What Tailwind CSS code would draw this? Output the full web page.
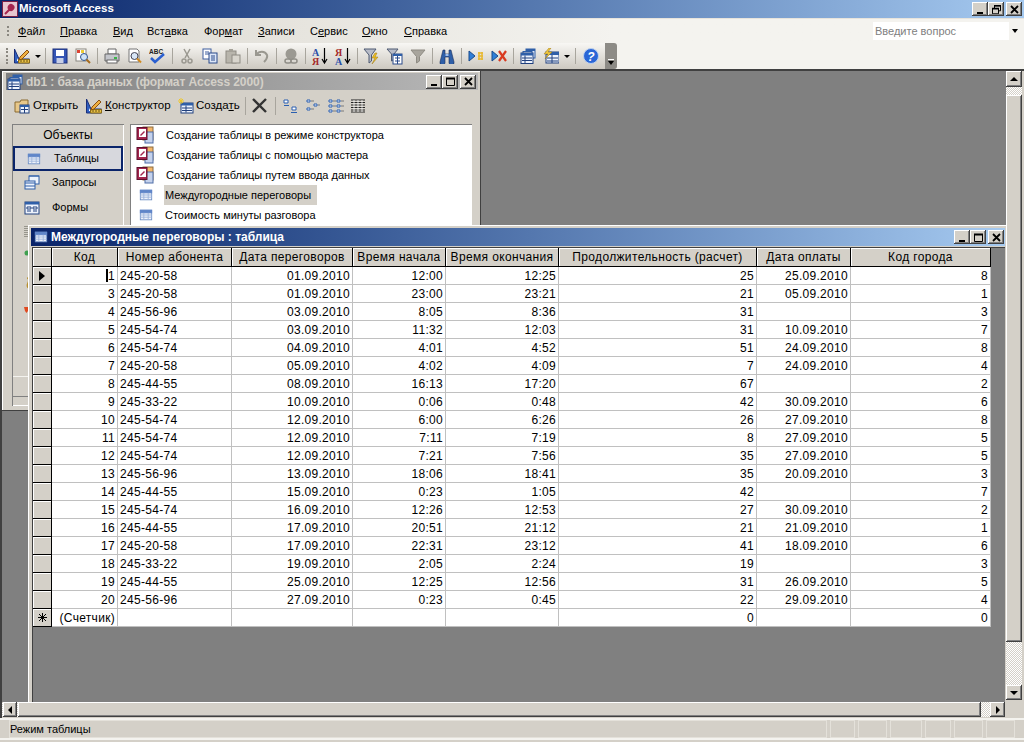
<!DOCTYPE html>
<html lang="ru">
<head>
<meta charset="UTF-8">
<title>Microsoft Access</title>
<script src="https://cdn.jsdelivr.net/npm/@tailwindcss/browser@4"></script>
</head>
<body class="bg-[#d4d0c8] text-black overflow-hidden font-['Liberation_Sans',Arial,sans-serif] text-[12px] leading-none">

<!-- icons used more than once -->
<svg class="hidden">
  <symbol id="i-table" viewBox="0 0 16 16"><rect x="1.500" y="2.500" width="13" height="11" fill="#eef2fb" stroke="#6d8ec4"/><rect x="1.500" y="2.500" width="13" height="3" fill="#5f85c8" stroke="#5f85c8"/><path d="M1.500 8h13M1.500 10.500h13M5.500 5.500v8M10.500 5.500v8" stroke="#9db4da"/></symbol>
  <symbol id="i-design" viewBox="0 0 16 16"><path d="M0.500 1v14h15v-4H5L0.500 1z" fill="#2f5fc0" stroke="#1b2f7a"/><path d="M3 10l1.500 3h-1.500z" fill="#fff"/><path d="M4.500 11.500h11v3.500h-11z" fill="#e8c14a" stroke="#8a6b16"/><path d="M7 12v2M10 12v2M13 12v2" stroke="#6b5210"/><path d="M6 9l7-7 2 2-7 7-3 1z" fill="#f0b040" stroke="#8a4f10"/></symbol>
  <symbol id="i-access" viewBox="0 0 18 18"><rect x="7" y="1" width="10" height="13" fill="#f3b66a" stroke="#8a6a40"/><rect x="9" y="6" width="8" height="11" fill="#c5d2ec" stroke="#4f6ea8"/><rect x="1" y="1.500" width="10" height="12" fill="#a5264f" stroke="#5f0f2c"/><rect x="3" y="3" width="7" height="8" fill="#fff"/><path d="M4 9l4-4 1 1-4 4z" fill="#a5264f"/></symbol>
  <symbol id="i-db" viewBox="0 0 16 16"><rect x="6" y="1" width="9" height="9" fill="#dbe6f8" stroke="#2f5fa8"/><rect x="6" y="1" width="9" height="2" fill="#2f5fa8"/><rect x="3" y="3.500" width="9" height="9" fill="#dbe6f8" stroke="#2f5fa8"/><rect x="1" y="5" width="12" height="10.500" fill="#eef3fc" stroke="#20407e"/><rect x="1" y="5" width="12" height="2.500" fill="#2f5fa8"/><path d="M2 10h10M2 12.500h10M5 7.500v8" stroke="#20407e"/></symbol>
  <symbol id="i-cap-min" viewBox="0 0 9 9"><rect x="1" y="7" width="6" height="2" fill="#000"/></symbol>
  <symbol id="i-cap-max" viewBox="0 0 9 9"><path d="M0.500 1.500h8v7h-8z" fill="none" stroke="#000"/><path d="M0 1.500h9" stroke="#000" stroke-width="2"/></symbol>
  <symbol id="i-cap-res" viewBox="0 0 9 9"><path d="M2.500 3V0.800h6v5H6.500M0.500 3.800h6v5h-6z" fill="none" stroke="#000"/><path d="M2 0.800h7M0 3.500h7" stroke="#000" stroke-width="1.500"/></symbol>
  <symbol id="i-cap-x" viewBox="0 0 9 9"><path d="M1 1l7 7M8 1l-7 7" stroke="#000" stroke-width="1.800"/></symbol>
</svg>

<div class="w-[1024px] h-[742px] flex flex-col overflow-hidden">

  <!-- app title bar -->
  <div class="h-[18px] shrink-0 flex items-center bg-linear-to-r from-[#0a246a] to-[#a6caf0] pl-[2px] pr-[2px]">
    <svg class="w-[16px] h-[16px]" viewBox="0 0 16 16"><rect x="0.500" y="0.500" width="15" height="15" fill="#e7c6cf" stroke="#7a1f45"/><path d="M3 13l5-5M7 5a2.500 2.500 0 1 1 4 3 2.500 2.500 0 0 1-4-3z" stroke="#a5264f" stroke-width="2" fill="#a5264f"/></svg>
    <span class="ml-[1px] text-white font-bold text-[11.500px]">Microsoft Access</span>
    <div class="ml-auto flex">
      <span class="w-[16px] h-[14px] flex items-center justify-center bg-[#d4d0c8] shadow-[inset_-1px_-1px_0_#404040,inset_1px_1px_0_#fff,inset_-2px_-2px_0_#808080]"><svg class="w-[9px] h-[9px]"><use href="#i-cap-min"/></svg></span>
      <span class="w-[16px] h-[14px] flex items-center justify-center bg-[#d4d0c8] shadow-[inset_-1px_-1px_0_#404040,inset_1px_1px_0_#fff,inset_-2px_-2px_0_#808080]"><svg class="w-[9px] h-[9px]"><use href="#i-cap-res"/></svg></span>
      <span class="ml-[2px] w-[16px] h-[14px] flex items-center justify-center bg-[#d4d0c8] shadow-[inset_-1px_-1px_0_#404040,inset_1px_1px_0_#fff,inset_-2px_-2px_0_#808080]"><svg class="w-[9px] h-[9px]"><use href="#i-cap-x"/></svg></span>
    </div>
  </div>

  <!-- menu bar -->
  <div class="h-[25px] shrink-0 flex items-center text-[11px] bg-linear-to-r from-[#dad7cf] to-[#f4f3ef] to-60% border-t border-[#e8e4dc] pl-[7px] pr-[3px]">
    <span class="w-[2px] h-[10px] mr-[9px] border-l-2 border-dotted border-[#8a8780]"></span>
    <span class="w-[42px]"><u>Ф</u>айл</span>
    <span class="w-[53px]"><u>П</u>равка</span>
    <span class="w-[34px]"><u>В</u>ид</span>
    <span class="w-[57px]">Вст<u>а</u>вка</span>
    <span class="w-[54px]">Фор<u>м</u>ат</span>
    <span class="w-[52px]"><u>З</u>аписи</span>
    <span class="w-[52px]">С<u>е</u>рвис</span>
    <span class="w-[42px]"><u>О</u>кно</span>
    <span class="w-[60px]"><u>С</u>правка</span>
    <div class="ml-auto w-[148px] h-[18px] bg-white flex items-center pl-[2px] text-[#808080] text-[11px]">Введите вопрос
      <span class="ml-auto w-[12px] h-[18px] bg-[#f4f3ef] flex items-center justify-center"><span class="border-x-[3.500px] border-x-transparent border-t-[4px] border-t-black"></span></span>
    </div>
  </div>

  <!-- standard toolbar -->
  <div class="h-[26px] shrink-0 bg-[#f4f3ef]">
    <div class="w-[617px] h-[26px] flex items-center rounded-r-[3px] pl-[6px] bg-linear-to-b from-[#f8f7f4] to-[#cdc9c1]">
      <span class="w-[2px] h-[16px] mr-[2px] border-l-2 border-dotted border-[#8a8780]"></span>
      <span class="w-[23px] flex justify-center"><svg class="w-[16px] h-[16px]"><use href="#i-design"/></svg></span>
      <span class="w-[9px] flex justify-center"><span class="border-x-[3px] border-x-transparent border-t-[3px] border-t-black"></span></span>
      <span class="w-[6px] flex justify-center"><span class="w-[1px] h-[16px] bg-[#a8a59d]"></span></span>
      <span class="w-[23px] flex justify-center"><svg class="w-[16px] h-[16px]" viewBox="0 0 16 16"><rect x="1" y="1" width="14" height="14" fill="#3555b5" stroke="#1b2f7a"/><rect x="4" y="2" width="8" height="6" fill="#fff"/><rect x="4.500" y="10" width="7" height="5" fill="#c7cfe6"/></svg></span>
      <span class="w-[23px] flex justify-center"><svg class="w-[16px] h-[16px]" viewBox="0 0 16 16"><rect x="1" y="1" width="10" height="12" fill="#fff" stroke="#8a8780"/><rect x="2" y="2" width="3" height="3" fill="#d43"/><rect x="6" y="2" width="3" height="3" fill="#ec3"/><circle cx="9" cy="9" r="3.500" fill="#cfe3f7" stroke="#33558a"/><path d="M11.500 11.500l3.500 3.500" stroke="#a66b1e" stroke-width="2"/></svg></span>
      <span class="w-[6px] flex justify-center"><span class="w-[1px] h-[16px] bg-[#a8a59d]"></span></span>
      <span class="w-[23px] flex justify-center"><svg class="w-[16px] h-[16px]" viewBox="0 0 16 16"><path d="M4 1h8v5H4z" fill="#fff" stroke="#666"/><path d="M1 6h14v7H1z" fill="#c4c6cc" stroke="#666"/><rect x="10" y="9" width="3" height="2" fill="#3bb54a"/><rect x="3" y="12" width="10" height="3" fill="#fff" stroke="#666"/></svg></span>
      <span class="w-[23px] flex justify-center"><svg class="w-[16px] h-[16px]" viewBox="0 0 16 16"><path d="M2 1h8l2 2v11H2z" fill="#fff" stroke="#777"/><circle cx="7.500" cy="8" r="3.500" fill="#d8e6f6" stroke="#445"/><path d="M10 10.500l4 4" stroke="#d08a20" stroke-width="2"/></svg></span>
      <span class="w-[23px] flex justify-center"><svg class="w-[17px] h-[16px]" viewBox="0 0 17 16"><text x="0" y="6" font-size="6.500" font-weight="700" fill="#222">ABC</text><path d="M2 10l4 4 9-8" fill="none" stroke="#2a5fd0" stroke-width="2.500"/></svg></span>
      <span class="w-[6px] flex justify-center"><span class="w-[1px] h-[16px] bg-[#a8a59d]"></span></span>
      <span class="w-[23px] flex justify-center"><svg class="w-[14px] h-[16px]" viewBox="0 0 14 16"><path d="M4 1l5 9M10 1l-5 9" stroke="#9a9890" stroke-width="1.500"/><circle cx="4" cy="13" r="2" fill="none" stroke="#9a9890" stroke-width="1.500"/><circle cx="10" cy="13" r="2" fill="none" stroke="#9a9890" stroke-width="1.500"/></svg></span>
      <span class="w-[23px] flex justify-center"><svg class="w-[16px] h-[16px]" viewBox="0 0 16 16"><rect x="1" y="1" width="8" height="10" fill="#fff" stroke="#3f5f9f"/><path d="M3 4h4M3 6h4" stroke="#3f5f9f"/><rect x="7" y="5" width="8" height="10" fill="#dde7f8" stroke="#2a4a8a"/><path d="M9 8h4M9 10h4M9 12h4" stroke="#2a4a8a"/></svg></span>
      <span class="w-[23px] flex justify-center"><svg class="w-[16px] h-[16px]" viewBox="0 0 16 16"><rect x="1" y="3" width="10" height="12" fill="#b8b5ac" stroke="#8e8b83"/><rect x="4" y="1" width="4" height="3" fill="#a5a299"/><rect x="7" y="7" width="8" height="8" fill="#d8d5cd" stroke="#8e8b83"/></svg></span>
      <span class="w-[6px] flex justify-center"><span class="w-[1px] h-[16px] bg-[#a8a59d]"></span></span>
      <span class="w-[23px] flex justify-center"><svg class="w-[14px] h-[14px]" viewBox="0 0 14 14"><path d="M1 1v5h5M1.500 5.500C4 2 10 1.500 12 6c1 3-1 5-3 7" fill="none" stroke="#9a9890" stroke-width="2"/></svg></span>
      <span class="w-[6px] flex justify-center"><span class="w-[1px] h-[16px] bg-[#a8a59d]"></span></span>
      <span class="w-[23px] flex justify-center"><svg class="w-[16px] h-[17px]" viewBox="0 0 16 17"><circle cx="8" cy="6" r="5.500" fill="#9b9992"/><path d="M2 13a2 2 0 0 1 2-2h2a2 2 0 0 1 0 4H4a2 2 0 0 1-2-2zM8 13a2 2 0 0 1 2-2h2a2 2 0 0 1 0 4h-2a2 2 0 0 1-2-2z" fill="none" stroke="#8f8d86" stroke-width="1.500"/></svg></span>
      <span class="w-[6px] flex justify-center"><span class="w-[1px] h-[16px] bg-[#a8a59d]"></span></span>
      <span class="w-[23px] flex justify-center"><svg class="w-[16px] h-[18px]" viewBox="0 0 16 18"><text x="0" y="8.500" font-size="10" font-weight="700" font-family="Liberation Serif" fill="#2a4fa8">А</text><text x="0" y="17.500" font-size="10" font-weight="700" font-family="Liberation Serif" fill="#a52a2a">Я</text><path d="M12.500 1v14M10 12l2.500 4 2.500-4" fill="none" stroke="#000" stroke-width="1.200"/></svg></span>
      <span class="w-[23px] flex justify-center"><svg class="w-[16px] h-[18px]" viewBox="0 0 16 18"><text x="0" y="8.500" font-size="10" font-weight="700" font-family="Liberation Serif" fill="#a52a2a">Я</text><text x="0" y="17.500" font-size="10" font-weight="700" font-family="Liberation Serif" fill="#2a4fa8">А</text><path d="M12.500 1v14M10 12l2.500 4 2.500-4" fill="none" stroke="#000" stroke-width="1.200"/></svg></span>
      <span class="w-[6px] flex justify-center"><span class="w-[1px] h-[16px] bg-[#a8a59d]"></span></span>
      <span class="w-[23px] flex justify-center"><svg class="w-[17px] h-[17px]" viewBox="0 0 17 17"><path d="M1 1h12L8.500 7v6L6 15V7z" fill="#b8bcc8" stroke="#4e5a72"/><path d="M12 5l-3 5h3l-3 6 6-7h-3l2-4z" fill="#f0c020" stroke="#9a7410" stroke-width="0.500"/></svg></span>
      <span class="w-[23px] flex justify-center"><svg class="w-[17px] h-[17px]" viewBox="0 0 17 17"><path d="M1 1h11L8 6v5L5.500 13V6z" fill="#b8bcc8" stroke="#4e5a72"/><rect x="7" y="6" width="9" height="10" fill="#fff" stroke="#2a4a8a"/><rect x="7" y="6" width="9" height="2" fill="#2f5fa8"/><path d="M9 10h5M9 13h5M11.500 8v8" stroke="#2a4a8a"/></svg></span>
      <span class="w-[23px] flex justify-center"><svg class="w-[16px] h-[15px]" viewBox="0 0 16 15"><path d="M1 1h14L9.500 7.500V12L6.500 14V7.500z" fill="#a8a59d" stroke="#8e8b83"/></svg></span>
      <span class="w-[6px] flex justify-center"><span class="w-[1px] h-[16px] bg-[#a8a59d]"></span></span>
      <span class="w-[23px] flex justify-center"><svg class="w-[16px] h-[15px]" viewBox="0 0 16 15"><path d="M4 1h2v4h4V1h2l3 12a2 2 0 0 1-5 1V8H6v6a2 2 0 0 1-5-1z" fill="#2f5fa8" stroke="#1b2f5a" stroke-width="0.600"/><rect x="6.500" y="5" width="3" height="2" fill="#9fc0ee"/></svg></span>
      <span class="w-[6px] flex justify-center"><span class="w-[1px] h-[16px] bg-[#a8a59d]"></span></span>
      <span class="w-[23px] flex justify-center"><svg class="w-[16px] h-[12px]" viewBox="0 0 16 12"><path d="M1 1l6 5-6 5z" fill="#2f7fd8" stroke="#1b4a8a"/><path d="M10 3h5M10 6h5M10 9h5M11 2v8M14 2v8" stroke="#e8b830" stroke-width="1.500"/></svg></span>
      <span class="w-[23px] flex justify-center"><svg class="w-[16px] h-[12px]" viewBox="0 0 16 12"><path d="M1 1l6 5-6 5z" fill="#2f7fd8" stroke="#1b4a8a"/><path d="M8 1l7 10M15 1L8 11" stroke="#d93a20" stroke-width="2.200"/></svg></span>
      <span class="w-[6px] flex justify-center"><span class="w-[1px] h-[16px] bg-[#a8a59d]"></span></span>
      <span class="w-[23px] flex justify-center"><svg class="w-[16px] h-[16px]"><use href="#i-db"/></svg></span>
      <span class="w-[23px] flex justify-center"><svg class="w-[16px] h-[16px]" viewBox="0 0 16 16"><rect x="3" y="4" width="13" height="11" fill="#eef3fc" stroke="#20407e"/><rect x="3" y="4" width="13" height="3" fill="#2f5fa8"/><path d="M4 10h11M4 13h11M9 7v8" stroke="#20407e"/><path d="M6 0L1 6h4L2 11l7-7H5l3-4z" fill="#f0c840" stroke="#9a7410" stroke-width="0.500"/></svg></span>
      <span class="w-[9px] flex justify-center"><span class="border-x-[3px] border-x-transparent border-t-[3px] border-t-black"></span></span>
      <span class="w-[8px] flex justify-center"><span class="w-[1px] h-[16px] bg-[#a8a59d]"></span></span>
      <span class="w-[23px] flex justify-center"><svg class="w-[16px] h-[16px]" viewBox="0 0 16 16"><circle cx="8" cy="8" r="7.500" fill="#2a66d6" stroke="#bcd0ee"/><text x="8" y="12.500" font-size="12" font-weight="700" text-anchor="middle" font-family="Liberation Sans" fill="#fff" font-style="italic">?</text></svg></span>
      <span class="ml-auto w-[12px] h-[26px] bg-[#8d8b86] rounded-r-[3px] flex flex-col items-center justify-end pb-[4px] gap-[1px]">
        <span class="w-[6px] h-[1px] bg-white"></span>
        <span class="border-x-[3px] border-x-transparent border-t-[4px] border-t-black"></span>
      </span>
    </div>
  </div>

  <!-- MDI client + scrollbars -->
  <div class="h-[649px] shrink-0 flex flex-col border-t-2 border-[#404040] border-l-2">
    <div class="flex h-[631px]">
      <div class="relative w-[1004px] bg-[#808080] overflow-hidden">

        <!-- database window -->
        <div class="absolute left-0 top-0 w-[479px] h-[340px] bg-[#d4d0c8] pt-[2px] pr-[3px] pl-[4px] shadow-[inset_-1px_-1px_0_#404040,inset_1px_1px_0_#fff]">
          <div class="h-[17px] flex items-center pl-[1px] pr-[2px] bg-linear-to-r from-[#808080] to-[#b8b8b8]">
            <svg class="w-[16px] h-[16px]"><use href="#i-db"/></svg>
            <span class="ml-[3px] font-bold text-[12px] text-[#d4d0c8] tracking-[-0.08px]">db1 : база данных (формат Access 2000)</span>
            <div class="ml-auto flex">
              <span class="w-[16px] h-[14px] flex items-center justify-center bg-[#d4d0c8] shadow-[inset_-1px_-1px_0_#404040,inset_1px_1px_0_#fff,inset_-2px_-2px_0_#808080]"><svg class="w-[9px] h-[9px]"><use href="#i-cap-min"/></svg></span>
              <span class="w-[16px] h-[14px] flex items-center justify-center bg-[#d4d0c8] shadow-[inset_-1px_-1px_0_#404040,inset_1px_1px_0_#fff,inset_-2px_-2px_0_#808080]"><svg class="w-[9px] h-[9px]"><use href="#i-cap-max"/></svg></span>
              <span class="ml-[2px] w-[16px] h-[14px] flex items-center justify-center bg-[#d4d0c8] shadow-[inset_-1px_-1px_0_#404040,inset_1px_1px_0_#fff,inset_-2px_-2px_0_#808080]"><svg class="w-[9px] h-[9px]"><use href="#i-cap-x"/></svg></span>
            </div>
          </div>

          <!-- database window toolbar -->
          <div class="h-[31px] flex items-center pl-[8px] text-[11.500px]">
            <svg class="w-[16px] h-[16px]" viewBox="0 0 16 16"><path d="M1 4h5l1-2h7v12H1z" fill="#e8c88a" stroke="#8a6b30"/><rect x="6" y="7" width="9" height="8" fill="#eef3fc" stroke="#20407e"/><rect x="6" y="7" width="9" height="2" fill="#2f5fa8"/><path d="M7 11.500h7M10.500 9v6" stroke="#20407e"/></svg>
            <span class="ml-[3px] w-[53px]">О<u>т</u>крыть</span>
            <svg class="w-[16px] h-[16px]"><use href="#i-design"/></svg>
            <span class="ml-[3px] w-[73px]"><u>К</u>онструктор</span>
            <svg class="w-[16px] h-[16px]" viewBox="0 0 16 16"><rect x="3" y="5" width="12" height="10" fill="#eef3fc" stroke="#20407e"/><rect x="3" y="5" width="12" height="2.500" fill="#2f5fa8"/><path d="M4 10h10M4 12.500h10M8 7.500v7" stroke="#20407e"/><path d="M3 0v6M0 3h6M1 1l4 4M5 1L1 5" stroke="#eec82a"/></svg>
            <span class="ml-[2px] w-[49px]">Созда<u>т</u>ь</span>
            <span class="w-[1px] h-[18px] bg-[#a8a59d] mr-[6px]"></span>
            <svg class="w-[15px] h-[15px]" viewBox="0 0 15 15"><path d="M1 1l13 13M14 1L1 14" stroke="#333" stroke-width="2.400"/></svg>
            <span class="w-[1px] h-[18px] bg-[#a8a59d] ml-[8px] mr-[7px]"></span>
            <svg class="w-[14px] h-[14px]" viewBox="0 0 14 14"><path d="M1 1h4v3H1zM9 8h4v3H9z" fill="#fff" stroke="#2a5fb0"/><path d="M1 6.500h5M8 13.500h6" stroke="#2a5fb0"/></svg>
            <svg class="ml-[9px] w-[14px] h-[14px]" viewBox="0 0 14 14"><path d="M1 1h3v2H1zM1 9h3v2H1zM8 5h3v2H8z" fill="#fff" stroke="#2a5fb0"/><path d="M5 2h3M5 10h3M12 6h2" stroke="#7a7a7a"/></svg>
            <svg class="ml-[8px] w-[16px] h-[14px]" viewBox="0 0 16 14"><path d="M1 1h3v2H1zM1 6h3v2H1zM1 11h3v2H1zM9 1h3v2H9zM9 6h3v2H9zM9 11h3v2H9z" fill="#fff" stroke="#2a5fb0"/><path d="M5 2h3M5 7h3M5 12h3M13 2h3M13 7h3M13 12h3" stroke="#7a7a7a"/></svg>
            <svg class="ml-[6px] w-[16px] h-[14px]" viewBox="0 0 16 14"><path d="M1 1h14M1 3.500h14M1 6h14M1 8.500h14M1 11h14M1 13h14" stroke="#222"/><path d="M4 1v12M8 1v12M12 1v12" stroke="#fff" stroke-width="0.800"/></svg>
          </div>

          <div class="flex h-[285px] pl-[6px] pt-[3px]">
            <!-- objects bar -->
            <div class="relative w-[112px] h-[282px] shadow-[inset_1px_1px_0_#808080,inset_-1px_-1px_0_#fff] p-[2px]">
              <div class="h-[20px] flex items-center justify-center pb-[2px]">Объекты</div>
              <div class="h-[25px] flex items-center pl-[12px] bg-[#d7d8dd] border-2 border-[#0a246a] -mx-[1px] text-[11px]"><svg class="w-[14px] h-[14px]"><use href="#i-table"/></svg><span class="ml-[13px]">Таблицы</span></div>
              <div class="h-[23px] flex items-center pl-[10px] text-[11px]"><svg class="w-[16px] h-[16px]" viewBox="0 0 16 16"><rect x="5" y="1" width="10" height="8" fill="#eef3fc" stroke="#2f5fa8"/><rect x="1" y="6" width="10" height="8" fill="#eef3fc" stroke="#2f5fa8"/><path d="M1 8h10M1 11h10M5 1h10" stroke="#2f5fa8"/></svg><span class="ml-[12px]">Запросы</span></div>
              <div class="h-[27px] flex items-center pl-[10px] text-[11px]"><svg class="w-[16px] h-[14px]" viewBox="0 0 16 14"><rect x="1" y="1" width="14" height="12" fill="#eef3fc" stroke="#20407e"/><rect x="1" y="1" width="14" height="2.500" fill="#2f5fa8"/><path d="M3 6h4v2H3zM9 6h4v2H9zM3 10h4M9 10h4" fill="#fff" stroke="#20407e"/></svg><span class="ml-[12px]">Формы</span></div>
              <!-- only the left sliver of these icons shows beside the datasheet -->
              <svg class="ml-[10px] mt-[3px] w-[16px] h-[16px]" viewBox="0 0 16 16"><path d="M1 2v12M3 2v12" stroke="#5a5a50" stroke-dasharray="1 1"/></svg>
              <svg class="ml-[10px] mt-[5px] w-[16px] h-[16px]" viewBox="0 0 16 16"><circle cx="3" cy="8" r="2.500" fill="#3f9f4f"/></svg>
              <svg class="ml-[10px] mt-[14px] w-[16px] h-[16px]" viewBox="0 0 16 16"><path d="M3 3c2 0 2 3 1 5s-1 5 1 5" fill="none" stroke="#b89030" stroke-width="1.500"/></svg>
              <svg class="ml-[10px] mt-[11px] w-[16px] h-[16px]" viewBox="0 0 16 16"><path d="M0 5h5l-1 4-1.500 2-1.500-2z" fill="#e04a20"/></svg>
              <!-- groups bar at the foot -->
              <div class="absolute left-[1px] right-[1px] bottom-[2px] h-[28px] border-t border-[#f4f3ef]">
                <div class="w-[15px] h-[20px] border-b border-[#808080]"></div>
              </div>
            </div>
            <!-- object list -->
            <div class="ml-[6px] w-[342px] h-[103px] bg-white shadow-[inset_1px_1px_0_#808080] pt-[1px] text-[11px] whitespace-nowrap">
              <div class="h-[20px] flex items-center pl-[6px]"><svg class="w-[18px] h-[18px]"><use href="#i-access"/></svg><span class="ml-[12px]">Создание таблицы в режиме конструктора</span></div>
              <div class="h-[20px] flex items-center pl-[6px]"><svg class="w-[18px] h-[18px]"><use href="#i-access"/></svg><span class="ml-[12px]">Создание таблицы с помощью мастера</span></div>
              <div class="h-[20px] flex items-center pl-[6px]"><svg class="w-[18px] h-[18px]"><use href="#i-access"/></svg><span class="ml-[12px]">Создание таблицы путем ввода данных</span></div>
              <div class="h-[20px] flex items-center pl-[9px]"><svg class="w-[14px] h-[14px]"><use href="#i-table"/></svg><span class="ml-[11px] h-[20px] w-[153px] pl-[1px] flex items-center bg-[#d4d0c8]">Междугородные переговоры</span></div>
              <div class="h-[20px] flex items-center pl-[9px]"><svg class="w-[14px] h-[14px]"><use href="#i-table"/></svg><span class="ml-[12px]">Стоимость минуты разговора</span></div>
            </div>
          </div>
        </div>

        <!-- datasheet window -->
        <div class="absolute left-[26px] top-[154px] w-[978px] h-[490px] flex flex-col bg-[#d4d0c8] pl-[3px] pt-[3px] pr-[1px] shadow-[inset_1px_1px_0_#fff]">
          <div class="h-[18px] shrink-0 flex items-center pl-[3px] pr-[1px] bg-linear-to-r from-[#0a246a] to-[#a6caf0]">
            <svg class="w-[14px] h-[14px]"><use href="#i-table"/></svg>
            <span class="ml-[3px] text-white font-bold text-[12px]">Междугородные переговоры : таблица</span>
            <div class="ml-auto flex">
              <span class="w-[16px] h-[14px] flex items-center justify-center bg-[#d4d0c8] shadow-[inset_-1px_-1px_0_#404040,inset_1px_1px_0_#fff,inset_-2px_-2px_0_#808080]"><svg class="w-[9px] h-[9px]"><use href="#i-cap-min"/></svg></span>
              <span class="w-[16px] h-[14px] flex items-center justify-center bg-[#d4d0c8] shadow-[inset_-1px_-1px_0_#404040,inset_1px_1px_0_#fff,inset_-2px_-2px_0_#808080]"><svg class="w-[9px] h-[9px]"><use href="#i-cap-max"/></svg></span>
              <span class="ml-[2px] w-[16px] h-[14px] flex items-center justify-center bg-[#d4d0c8] shadow-[inset_-1px_-1px_0_#404040,inset_1px_1px_0_#fff,inset_-2px_-2px_0_#808080]"><svg class="w-[9px] h-[9px]"><use href="#i-cap-x"/></svg></span>
            </div>
          </div>
          <div class="flex-1 mt-[1px] ml-[1px] bg-[#808080] border-t border-l border-[#404040] overflow-hidden">
            <div id="sheet" class="grid w-[958px] grid-cols-[19px_66px_114px_121px_93px_113px_198px_94px_140px]"></div>
          </div>
        </div>
      </div>

      <!-- vertical scrollbar -->
      <div class="w-[16px] flex flex-col border-b-2 border-[#d4d0c8] bg-[repeating-conic-gradient(#ffffff_0%_25%,#d4d0c8_0%_50%)] bg-[length:2px_2px]">
        <span class="h-[16px] flex items-center justify-center bg-[#d4d0c8] shadow-[inset_-1px_-1px_0_#404040,inset_1px_1px_0_#fff,inset_-2px_-2px_0_#808080]"><span class="border-x-[4px] border-x-transparent border-b-[4px] border-b-black"></span></span>
        <span class="h-[547px] mt-[8px] bg-[#d4d0c8] shadow-[inset_-1px_-1px_0_#404040,inset_1px_1px_0_#fff,inset_-2px_-2px_0_#808080]"></span>
        <span class="mt-auto h-[15px] flex items-center justify-center bg-[#d4d0c8] shadow-[inset_-1px_-1px_0_#404040,inset_1px_1px_0_#fff,inset_-2px_-2px_0_#808080]"><span class="border-x-[4px] border-x-transparent border-t-[4px] border-t-black"></span></span>
      </div>
    </div>

    <!-- horizontal scrollbar -->
    <div class="h-[15px] flex">
      <div class="w-[1003px] flex bg-[repeating-conic-gradient(#ffffff_0%_25%,#d4d0c8_0%_50%)] bg-[length:2px_2px]">
        <span class="ml-[1px] w-[14px] flex items-center justify-center bg-[#d4d0c8] shadow-[inset_-1px_-1px_0_#404040,inset_1px_1px_0_#fff,inset_-2px_-2px_0_#808080]"><span class="border-y-[4px] border-y-transparent border-r-[4px] border-r-black"></span></span>
        <span class="ml-[1px] w-[963px] bg-[#d4d0c8] shadow-[inset_-1px_-1px_0_#404040,inset_1px_1px_0_#fff,inset_-2px_-2px_0_#808080]"></span>
        <span class="ml-auto w-[15px] flex items-center justify-center bg-[#d4d0c8] shadow-[inset_-1px_-1px_0_#404040,inset_1px_1px_0_#fff,inset_-2px_-2px_0_#808080]"><span class="border-y-[4px] border-y-transparent border-l-[4px] border-l-black"></span></span>
      </div>
    </div>
  </div>

  <!-- status bar -->
  <div class="h-[22px] shrink-0 flex items-center gap-[3px] pl-[9px] border-t-2 border-t-[#f4f3ef] border-b-2 border-b-[#f4f3ef] text-[11px]">
    <span class="w-[818px] h-[18px] flex items-center border border-[#e4e1da]">Режим таблицы</span>
    <span class="w-[25px] h-[18px] border border-[#e4e1da]"></span>
    <span class="w-[29px] h-[18px] border border-[#e4e1da]"></span>
    <span class="w-[32px] h-[18px] border border-[#e4e1da]"></span>
    <span class="w-[26px] h-[18px] border border-[#e4e1da]"></span>
    <span class="w-[29px] h-[18px] border border-[#e4e1da]"></span>
    <span class="w-[29px] h-[18px] border border-[#e4e1da]"></span>
  </div>
</div>

<script>
  const headers = ["Код", "Номер абонента", "Дата переговоров", "Время начала", "Время окончания", "Продолжительность (расчет)", "Дата оплаты", "Код города"];
  const rows = [
    ["1", "245-20-58", "01.09.2010", "12:00", "12:25", "25", "25.09.2010", "8"],
    ["3", "245-20-58", "01.09.2010", "23:00", "23:21", "21", "05.09.2010", "1"],
    ["4", "245-56-96", "03.09.2010", "8:05", "8:36", "31", "", "3"],
    ["5", "245-54-74", "03.09.2010", "11:32", "12:03", "31", "10.09.2010", "7"],
    ["6", "245-54-74", "04.09.2010", "4:01", "4:52", "51", "24.09.2010", "8"],
    ["7", "245-20-58", "05.09.2010", "4:02", "4:09", "7", "24.09.2010", "4"],
    ["8", "245-44-55", "08.09.2010", "16:13", "17:20", "67", "", "2"],
    ["9", "245-33-22", "10.09.2010", "0:06", "0:48", "42", "30.09.2010", "6"],
    ["10", "245-54-74", "12.09.2010", "6:00", "6:26", "26", "27.09.2010", "8"],
    ["11", "245-54-74", "12.09.2010", "7:11", "7:19", "8", "27.09.2010", "5"],
    ["12", "245-54-74", "12.09.2010", "7:21", "7:56", "35", "27.09.2010", "5"],
    ["13", "245-56-96", "13.09.2010", "18:06", "18:41", "35", "20.09.2010", "3"],
    ["14", "245-44-55", "15.09.2010", "0:23", "1:05", "42", "", "7"],
    ["15", "245-54-74", "16.09.2010", "12:26", "12:53", "27", "30.09.2010", "2"],
    ["16", "245-44-55", "17.09.2010", "20:51", "21:12", "21", "21.09.2010", "1"],
    ["17", "245-20-58", "17.09.2010", "22:31", "23:12", "41", "18.09.2010", "6"],
    ["18", "245-33-22", "19.09.2010", "2:05", "2:24", "19", "", "3"],
    ["19", "245-44-55", "25.09.2010", "12:25", "12:56", "31", "26.09.2010", "5"],
    ["20", "245-56-96", "27.09.2010", "0:23", "0:45", "22", "29.09.2010", "4"],
    ["(Счетчик)", "", "", "", "", "0", "", "0"]
  ];

  const headCell = "h-[19px] flex items-center justify-center bg-[#d4d0c8] border-r border-b border-black shadow-[inset_1px_1px_0_#fff] tracking-[0.35px] whitespace-nowrap";
  const rowHead = "h-[18px] flex items-center justify-center bg-[#d4d0c8] border-r border-b border-black shadow-[inset_1px_1px_0_#fff]";
  const numCell = "h-[18px] flex items-center justify-end pr-[2px] bg-white border-r border-b border-[#c0c0c0] tracking-[0.3px]";
  const textCell = "h-[18px] flex items-center pl-[2px] bg-white border-r border-b border-[#c0c0c0] tracking-[0.3px]";

  let html = `<div class="${headCell}"></div>`;
  headers.forEach(h => { html += `<div class="${headCell}">${h}</div>`; });

  rows.forEach((row, i) => {
    let marker = "";
    if (i === 0) marker = '<span class="border-y-[5px] border-y-transparent border-l-[6px] border-l-black"></span>';
    if (i === rows.length - 1) marker = '<svg class="w-[9px] h-[9px]" viewBox="0 0 9 9"><path d="M4.500 0v9M0 4.500h9M1 1l7 7M8 1l-7 7" stroke="#000"/></svg>';
    html += `<div class="${rowHead}">${marker}</div>`;
    row.forEach((val, c) => {
      const caret = i === 0 && c === 0 ? '<span class="w-[2px] h-[13px] bg-black"></span>' : "";
      html += `<div class="${c === 1 ? textCell : numCell}">${caret}${val}</div>`;
    });
  });
  document.getElementById("sheet").innerHTML = html;
</script>
</body>
</html>
